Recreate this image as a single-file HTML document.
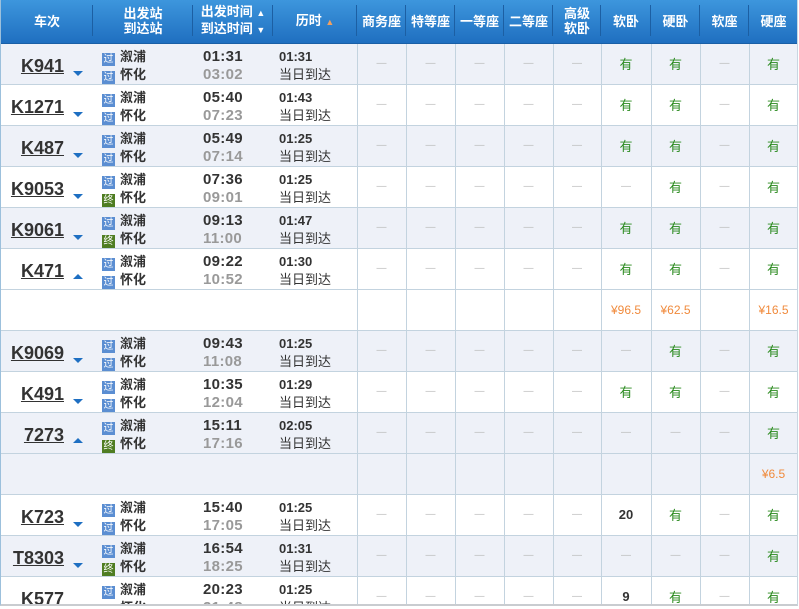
<!DOCTYPE html>
<html><head><meta charset="utf-8"><style>
*{margin:0;padding:0;box-sizing:border-box}
body{width:799px;height:609px;overflow:hidden;background:#fff;font-family:"Liberation Sans","Noto Sans CJK SC",sans-serif;font-size:12px;color:#333}
.wrap{position:absolute;left:0;top:0;width:798px;height:606px;overflow:hidden;border-left:1px solid #9cc0dc;border-right:1px solid #c8d6e2;border-bottom:2px solid #c9ccd0}
table{border-collapse:collapse;table-layout:fixed;width:797px}
th{height:43px;background:linear-gradient(#3d96dd,#1f6fc0);color:#fff;font-weight:bold;font-size:13px;line-height:15px;position:relative;border-bottom:1px solid #1a5fa6}
th:after{content:"";position:absolute;right:0;top:5px;height:31px;width:1px;background:#1c5fa3;box-shadow:1px 0 0 #5aa6e4}
th:last-child:after{display:none}
td{height:41px;border:1px solid #c3d3df;text-align:center;vertical-align:middle;color:#999;font-size:12px}
tr.l td{background:#eef1f8}
td.n{text-align:left;padding-left:7px;padding-top:6px;border-left:none;border-right:none}
td.s,td.t,td.d{border-left:none;border-right:none;text-align:left;line-height:18px;padding-top:4px}
td.s{padding-left:9px;color:#333;font-weight:bold;font-size:13px}
td.t{padding-left:10px;font-weight:bold;font-size:15px;color:#333;letter-spacing:0.3px}
td.d{padding-left:6px;font-size:13px;color:#333;border-right:1px solid #c3d3df}
.no{font-size:18px;font-weight:bold;color:#333;text-decoration:underline;display:inline-block;text-align:right;width:56px}
.ar{display:inline-block;width:0;height:0;border-left:5px solid transparent;border-right:5px solid transparent;margin-left:9px;vertical-align:-4px}
.dn{border-top:5px solid #1e6fc2}
.up{border-bottom:5px solid #1e6fc2;vertical-align:-2px}
.ic{display:inline-block;width:13px;height:13px;background:#5b8ed2;color:#fff;font-size:10px;line-height:13px;text-align:center;margin-right:5px;font-weight:normal;vertical-align:-1px}
.z{background:#4f7d22}
.g{color:#999}
.y{color:#2a8a1e;font-size:13px}
.b{color:#333;font-weight:bold;font-size:13px}
.p{color:#f08a3c;font-size:12px}
.dash{color:#bbb;font-size:10px}
.tri{font-size:9px}
</style></head><body><div class="wrap">
<table>
<colgroup><col style="width:92px"><col style="width:100px"><col style="width:80px"><col style="width:84px"><col style="width:49px"><col style="width:49px"><col style="width:49px"><col style="width:49px"><col style="width:48px"><col style="width:50px"><col style="width:49px"><col style="width:49px"><col style="width:49px"></colgroup>
<tr><th>车次</th><th>出发站<br>到达站</th><th>出发时间 <span class="tri">▲</span><br>到达时间 <span class="tri">▼</span></th><th>历时 <span class="tri" style="color:#f0a060">▲</span></th><th>商务座</th><th>特等座</th><th>一等座</th><th>二等座</th><th>高级<br>软卧</th><th>软卧</th><th>硬卧</th><th>软座</th><th>硬座</th></tr>

<tr class="l"><td class="n"><span class="no">K941</span><span class="ar dn"></span></td><td class="s"><span class="ic">过</span>溆浦<br><span class="ic">过</span>怀化</td><td class="t">01:31<br><span class="g">03:02</span></td><td class="d"><b>01:31</b><br>当日到达</td><td class="dash">—</td><td class="dash">—</td><td class="dash">—</td><td class="dash">—</td><td class="dash">—</td><td class="y">有</td><td class="y">有</td><td class="dash">—</td><td class="y">有</td></tr>
<tr><td class="n"><span class="no">K1271</span><span class="ar dn"></span></td><td class="s"><span class="ic">过</span>溆浦<br><span class="ic">过</span>怀化</td><td class="t">05:40<br><span class="g">07:23</span></td><td class="d"><b>01:43</b><br>当日到达</td><td class="dash">—</td><td class="dash">—</td><td class="dash">—</td><td class="dash">—</td><td class="dash">—</td><td class="y">有</td><td class="y">有</td><td class="dash">—</td><td class="y">有</td></tr>
<tr class="l"><td class="n"><span class="no">K487</span><span class="ar dn"></span></td><td class="s"><span class="ic">过</span>溆浦<br><span class="ic">过</span>怀化</td><td class="t">05:49<br><span class="g">07:14</span></td><td class="d"><b>01:25</b><br>当日到达</td><td class="dash">—</td><td class="dash">—</td><td class="dash">—</td><td class="dash">—</td><td class="dash">—</td><td class="y">有</td><td class="y">有</td><td class="dash">—</td><td class="y">有</td></tr>
<tr><td class="n"><span class="no">K9053</span><span class="ar dn"></span></td><td class="s"><span class="ic">过</span>溆浦<br><span class="ic z">终</span>怀化</td><td class="t">07:36<br><span class="g">09:01</span></td><td class="d"><b>01:25</b><br>当日到达</td><td class="dash">—</td><td class="dash">—</td><td class="dash">—</td><td class="dash">—</td><td class="dash">—</td><td class="dash">—</td><td class="y">有</td><td class="dash">—</td><td class="y">有</td></tr>
<tr class="l"><td class="n"><span class="no">K9061</span><span class="ar dn"></span></td><td class="s"><span class="ic">过</span>溆浦<br><span class="ic z">终</span>怀化</td><td class="t">09:13<br><span class="g">11:00</span></td><td class="d"><b>01:47</b><br>当日到达</td><td class="dash">—</td><td class="dash">—</td><td class="dash">—</td><td class="dash">—</td><td class="dash">—</td><td class="y">有</td><td class="y">有</td><td class="dash">—</td><td class="y">有</td></tr>
<tr><td class="n"><span class="no">K471</span><span class="ar up"></span></td><td class="s"><span class="ic">过</span>溆浦<br><span class="ic">过</span>怀化</td><td class="t">09:22<br><span class="g">10:52</span></td><td class="d"><b>01:30</b><br>当日到达</td><td class="dash">—</td><td class="dash">—</td><td class="dash">—</td><td class="dash">—</td><td class="dash">—</td><td class="y">有</td><td class="y">有</td><td class="dash">—</td><td class="y">有</td></tr>
<tr><td colspan="4" style="border-left:none"></td><td></td><td></td><td></td><td></td><td></td><td class="p">¥96.5</td><td class="p">¥62.5</td><td></td><td class="p">¥16.5</td></tr>
<tr class="l"><td class="n"><span class="no">K9069</span><span class="ar dn"></span></td><td class="s"><span class="ic">过</span>溆浦<br><span class="ic">过</span>怀化</td><td class="t">09:43<br><span class="g">11:08</span></td><td class="d"><b>01:25</b><br>当日到达</td><td class="dash">—</td><td class="dash">—</td><td class="dash">—</td><td class="dash">—</td><td class="dash">—</td><td class="dash">—</td><td class="y">有</td><td class="dash">—</td><td class="y">有</td></tr>
<tr><td class="n"><span class="no">K491</span><span class="ar dn"></span></td><td class="s"><span class="ic">过</span>溆浦<br><span class="ic">过</span>怀化</td><td class="t">10:35<br><span class="g">12:04</span></td><td class="d"><b>01:29</b><br>当日到达</td><td class="dash">—</td><td class="dash">—</td><td class="dash">—</td><td class="dash">—</td><td class="dash">—</td><td class="y">有</td><td class="y">有</td><td class="dash">—</td><td class="y">有</td></tr>
<tr class="l"><td class="n"><span class="no">7273</span><span class="ar up"></span></td><td class="s"><span class="ic">过</span>溆浦<br><span class="ic z">终</span>怀化</td><td class="t">15:11<br><span class="g">17:16</span></td><td class="d"><b>02:05</b><br>当日到达</td><td class="dash">—</td><td class="dash">—</td><td class="dash">—</td><td class="dash">—</td><td class="dash">—</td><td class="dash">—</td><td class="dash">—</td><td class="dash">—</td><td class="y">有</td></tr>
<tr class="l"><td colspan="4" style="border-left:none"></td><td></td><td></td><td></td><td></td><td></td><td></td><td></td><td></td><td class="p">¥6.5</td></tr>
<tr><td class="n"><span class="no">K723</span><span class="ar dn"></span></td><td class="s"><span class="ic">过</span>溆浦<br><span class="ic">过</span>怀化</td><td class="t">15:40<br><span class="g">17:05</span></td><td class="d"><b>01:25</b><br>当日到达</td><td class="dash">—</td><td class="dash">—</td><td class="dash">—</td><td class="dash">—</td><td class="dash">—</td><td class="b">20</td><td class="y">有</td><td class="dash">—</td><td class="y">有</td></tr>
<tr class="l"><td class="n"><span class="no">T8303</span><span class="ar dn"></span></td><td class="s"><span class="ic">过</span>溆浦<br><span class="ic z">终</span>怀化</td><td class="t">16:54<br><span class="g">18:25</span></td><td class="d"><b>01:31</b><br>当日到达</td><td class="dash">—</td><td class="dash">—</td><td class="dash">—</td><td class="dash">—</td><td class="dash">—</td><td class="dash">—</td><td class="dash">—</td><td class="dash">—</td><td class="y">有</td></tr>
<tr><td class="n"><span class="no">K577</span><span class="ar dn"></span></td><td class="s"><span class="ic">过</span>溆浦<br><span class="ic">过</span>怀化</td><td class="t">20:23<br><span class="g">21:48</span></td><td class="d"><b>01:25</b><br>当日到达</td><td class="dash">—</td><td class="dash">—</td><td class="dash">—</td><td class="dash">—</td><td class="dash">—</td><td class="b">9</td><td class="y">有</td><td class="dash">—</td><td class="y">有</td></tr>
</table>
</div></body></html>
